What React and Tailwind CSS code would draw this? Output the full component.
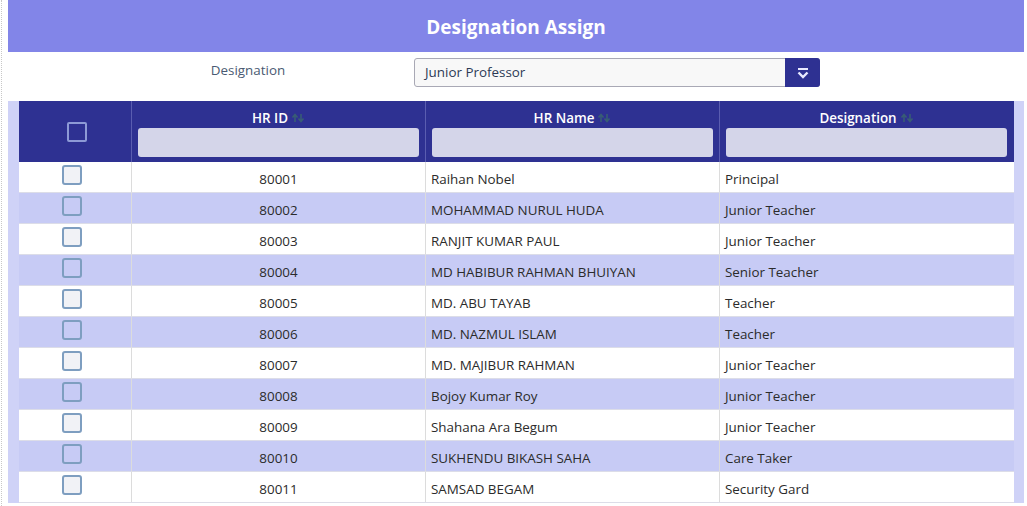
import React from "react";

const rows = [
  ["80001", "Raihan Nobel", "Principal"],
  ["80002", "MOHAMMAD NURUL HUDA", "Junior Teacher"],
  ["80003", "RANJIT KUMAR PAUL", "Junior Teacher"],
  ["80004", "MD HABIBUR RAHMAN BHUIYAN", "Senior Teacher"],
  ["80005", "MD. ABU TAYAB", "Teacher"],
  ["80006", "MD. NAZMUL ISLAM", "Teacher"],
  ["80007", "MD. MAJIBUR RAHMAN", "Junior Teacher"],
  ["80008", "Bojoy Kumar Roy", "Junior Teacher"],
  ["80009", "Shahana Ara Begum", "Junior Teacher"],
  ["80010", "SUKHENDU BIKASH SAHA", "Care Taker"],
  ["80011", "SAMSAD BEGAM", "Security Gard"],
];

function SortIcon() {
  return (
    <svg width="14" height="10" viewBox="0 0 14 10" className="ml-[3px] opacity-60">
      <path d="M4 9V2M1.5 4.5L4 1.5L6.5 4.5" stroke="#3f7a62" strokeWidth="1.6" fill="none" />
      <path d="M10 1v7M7.5 5.5L10 8.5L12.5 5.5" stroke="#3f7a62" strokeWidth="1.6" fill="none" />
    </svg>
  );
}

function HeaderCell({ label }) {
  return (
    <div className="flex flex-col border-l border-[#5a5db0] px-[6px] pt-[8px]">
      <div className="flex h-[18px] items-center justify-center text-[13.4px] font-semibold text-white">
        {label}
        <SortIcon />
      </div>
      <div className="mt-px h-[29px] rounded-[3px] bg-[#d4d5e9]" />
    </div>
  );
}

export default function App() {
  return (
    <div
      className="h-[506px] w-[1027px] overflow-hidden bg-white"
      style={{ fontFamily: '"Open Sans", "Noto Sans", sans-serif' }}
    >
      <div className="ml-px h-full border-l border-dotted border-[#c8c8c8] pl-[6px] pr-[3px]">
        <div className="flex h-[52px] items-center justify-center bg-[#8285e8] pt-[3px] text-[19px] font-bold text-white">
          Designation Assign
        </div>
        <div className="flex h-[49px] items-start pt-[6px]">
          <div className="w-[406px] pl-[74px] pt-[2px] text-center text-[13.4px] text-[#4a5a72]">
            Designation
          </div>
          <div className="flex h-[29px] w-[406px] items-stretch rounded-[3px] border border-[#a9a9b5] bg-[#f8f8f8]">
            <div className="flex flex-1 items-center pl-[10px] text-[13.4px] text-[#2c3a55]">
              Junior Professor
            </div>
            <div className="-my-px -mr-px flex w-[35px] items-center justify-center rounded-r-[3px] bg-[#2e3192]">
              <svg width="14" height="12" viewBox="0 0 14 12">
                <rect x="2" y="1" width="10" height="2" fill="#e8e9ff" />
                <path d="M2.5 5.5L7 10L11.5 5.5" stroke="#e8e9ff" strokeWidth="2.4" fill="none" />
              </svg>
            </div>
          </div>
        </div>
        <div className="bg-[#cfd2f7] px-[11px] pr-[10px]">
          <div className="grid grid-cols-[112px_294px_294px_294px] bg-[#2e3192]">
            <div className="flex h-[61px] items-center justify-center pl-[3px]">
              <div className="h-[20px] w-[20px] rounded-[2px] border-2 border-[#8d9ad6]" />
            </div>
            <HeaderCell label="HR ID" />
            <HeaderCell label="HR Name" />
            <HeaderCell label="Designation" />
          </div>
          {rows.map((r, i) => (
            <div
              key={r[0]}
              className={`grid h-[31px] grid-cols-[112px_294px_294px_294px] border-b border-[#dcdde8] text-[13.4px] text-[#2b2b2b] ${
                i % 2 === 1 ? "bg-[#c7cbf5]" : "bg-white"
              }`}
            >
              <div className="flex justify-center pr-[6px] pt-[3px]">
                <div
                  className={`h-[20px] w-[20px] rounded-[3px] border-2 border-[#7e9ec0] ${
                    i % 2 === 1 ? "bg-[#c7cbf5]" : "bg-[#f1f2f6]"
                  }`}
                />
              </div>
              <div className="flex items-center justify-center border-l border-[#dcdcdc] pt-[4px]">{r[0]}</div>
              <div className="flex items-center border-l border-[#dcdcdc] pl-[5px] pt-[4px]">{r[1]}</div>
              <div className="flex items-center border-l border-[#dcdcdc] pl-[5px] pt-[4px]">{r[2]}</div>
            </div>
          ))}
        </div>
      </div>
    </div>
  );
}
